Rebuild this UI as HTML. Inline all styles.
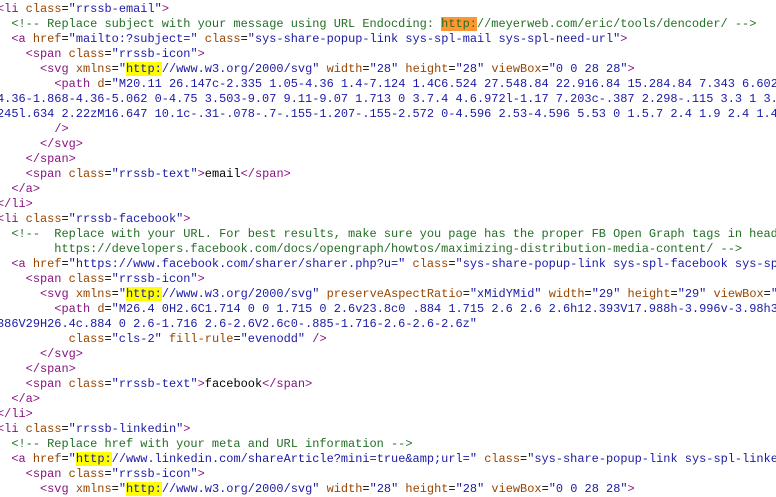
<!DOCTYPE html>
<html><head><meta charset="utf-8"><style>
html,body{margin:0;padding:0;background:#fff;width:776px;height:489px;overflow:hidden}
pre{margin:0;position:absolute;left:-3px;top:2px;font-family:"Liberation Mono",monospace;font-size:11.95px;line-height:15px;color:#000;white-space:pre}
.t{color:#881280}.a{color:#994500}.v{color:#1a1aa6}.c{color:#236e25}
.y{background:#ffff00}.o{background:#ff9632}
</style></head><body>
<pre><span class="t">&lt;li</span> <span class="a">class</span>=<span class="v">"rrssb-email"</span><span class="t">&gt;</span>
  <span class="c">&lt;!-- Replace subject with your message using URL Endocding: <span class="o">http:</span>//meyerweb.com/eric/tools/dencoder/ --&gt;</span>
  <span class="t">&lt;a</span> <span class="a">href</span>=<span class="v">"mailto:?subject="</span> <span class="a">class</span>=<span class="v">"sys-share-popup-link sys-spl-mail sys-spl-need-url"</span><span class="t">&gt;</span>
    <span class="t">&lt;span</span> <span class="a">class</span>=<span class="v">"rrssb-icon"</span><span class="t">&gt;</span>
      <span class="t">&lt;svg</span> <span class="a">xmlns</span>=<span class="v">"<span class="y">http:</span>//www.w3.org/2000/svg"</span> <span class="a">width</span>=<span class="v">"28"</span> <span class="a">height</span>=<span class="v">"28"</span> <span class="a">viewBox</span>=<span class="v">"0 0 28 28"</span><span class="t">&gt;</span>
        <span class="t">&lt;path</span> <span class="a">d</span>=<span class="v">"M20.11 26.147c-2.335 1.05-4.36 1.4-7.124 1.4C6.524 27.548.84 22.916.84 15.284.84 7.343 6.602</span>
<span class="v">4.36-1.868-4.36-5.062 0-4.75 3.503-9.07 9.11-9.07 1.713 0 3.7.4 4.6.972l-1.17 7.203c-.387 2.298-.115 3.3 1 3.</span>
<span class="v">245l.634 2.22zM16.647 10.1c-.31-.078-.7-.155-1.207-.155-2.572 0-4.596 2.53-4.596 5.53 0 1.5.7 2.4 1.9 2.4 1.4</span>
        <span class="t">/&gt;</span>
      <span class="t">&lt;/svg&gt;</span>
    <span class="t">&lt;/span&gt;</span>
    <span class="t">&lt;span</span> <span class="a">class</span>=<span class="v">"rrssb-text"</span><span class="t">&gt;</span>email<span class="t">&lt;/span&gt;</span>
  <span class="t">&lt;/a&gt;</span>
<span class="t">&lt;/li&gt;</span>
<span class="t">&lt;li</span> <span class="a">class</span>=<span class="v">"rrssb-facebook"</span><span class="t">&gt;</span>
  <span class="c">&lt;!--  Replace with your URL. For best results, make sure you page has the proper FB Open Graph tags in head</span>
<span class="c">        https://developers.facebook.com/docs/opengraph/howtos/maximizing-distribution-media-content/ --&gt;</span>
  <span class="t">&lt;a</span> <span class="a">href</span>=<span class="v">"https://www.facebook.com/sharer/sharer.php?u="</span> <span class="a">class</span>=<span class="v">"sys-share-popup-link sys-spl-facebook sys-sp</span>
    <span class="t">&lt;span</span> <span class="a">class</span>=<span class="v">"rrssb-icon"</span><span class="t">&gt;</span>
      <span class="t">&lt;svg</span> <span class="a">xmlns</span>=<span class="v">"<span class="y">http:</span>//www.w3.org/2000/svg"</span> <span class="a">preserveAspectRatio</span>=<span class="v">"xMidYMid"</span> <span class="a">width</span>=<span class="v">"29"</span> <span class="a">height</span>=<span class="v">"29"</span> <span class="a">viewBox</span>=<span class="v">"</span>
        <span class="t">&lt;path</span> <span class="a">d</span>=<span class="v">"M26.4 0H2.6C1.714 0 0 1.715 0 2.6v23.8c0 .884 1.715 2.6 2.6 2.6h12.393V17.988h-3.996v-3.98h3</span>
<span class="v">386V29H26.4c.884 0 2.6-1.716 2.6-2.6V2.6c0-.885-1.716-2.6-2.6-2.6z"</span>
          <span class="a">class</span>=<span class="v">"cls-2"</span> <span class="a">fill-rule</span>=<span class="v">"evenodd"</span> <span class="t">/&gt;</span>
      <span class="t">&lt;/svg&gt;</span>
    <span class="t">&lt;/span&gt;</span>
    <span class="t">&lt;span</span> <span class="a">class</span>=<span class="v">"rrssb-text"</span><span class="t">&gt;</span>facebook<span class="t">&lt;/span&gt;</span>
  <span class="t">&lt;/a&gt;</span>
<span class="t">&lt;/li&gt;</span>
<span class="t">&lt;li</span> <span class="a">class</span>=<span class="v">"rrssb-linkedin"</span><span class="t">&gt;</span>
  <span class="c">&lt;!-- Replace href with your meta and URL information --&gt;</span>
  <span class="t">&lt;a</span> <span class="a">href</span>=<span class="v">"<span class="y">http:</span>//www.linkedin.com/shareArticle?mini=true&amp;amp;url="</span> <span class="a">class</span>=<span class="v">"sys-share-popup-link sys-spl-linke</span>
    <span class="t">&lt;span</span> <span class="a">class</span>=<span class="v">"rrssb-icon"</span><span class="t">&gt;</span>
      <span class="t">&lt;svg</span> <span class="a">xmlns</span>=<span class="v">"<span class="y">http:</span>//www.w3.org/2000/svg"</span> <span class="a">width</span>=<span class="v">"28"</span> <span class="a">height</span>=<span class="v">"28"</span> <span class="a">viewBox</span>=<span class="v">"0 0 28 28"</span><span class="t">&gt;</span>
</pre>
</body></html>
